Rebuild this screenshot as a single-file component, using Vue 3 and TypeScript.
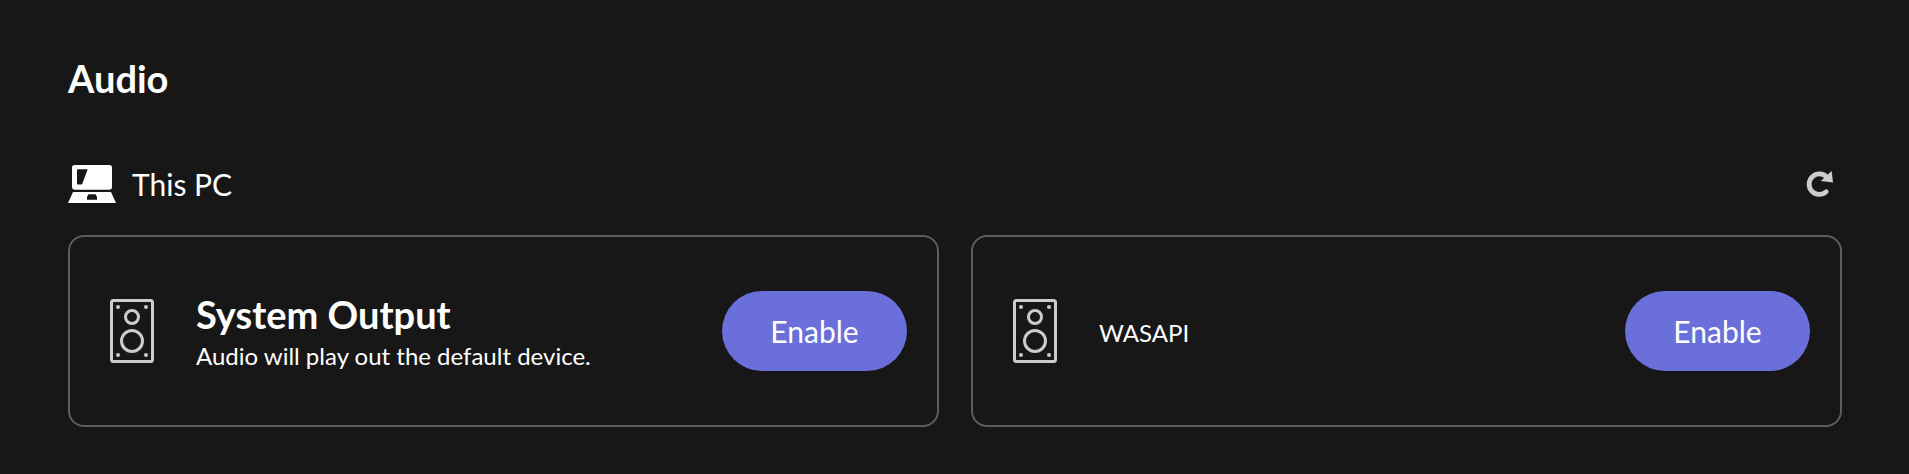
<script setup lang="ts">
interface Device {
  title?: string
  text: string
}

const devices: Device[] = [
  { title: 'System Output', text: 'Audio will play out the default device.' },
  { text: 'WASAPI' },
]
</script>

<template>
  <main class="page">
    <h1 class="heading">Audio</h1>

    <div class="group">
      <svg class="laptop" viewBox="0 0 48 48">
        <path fill="#fff" fill-rule="evenodd" d="M6.500 5H41.500Q44 5 44 7.500V27Q44 29.700 41 29.700H7Q4 29.700 4 27V7.500Q4 5 6.500 5ZM10 9.200Q9 9.200 9 10.200V23.500Q9 24.500 10 24.500H13Q14 24.500 14.400 23.500L19.700 9.200Z" />
        <path fill="#fff" fill-rule="evenodd" d="M5 32H43L48 43H0ZM20.500 34.300L19 37V39.700H29V37L27.500 34.300Z" />
      </svg>
      <span class="group-name">This PC</span>
      <button class="refresh" aria-label="Refresh">
        <svg width="28" height="28" viewBox="0 0 28 28">
          <path d="M20.200 21.700A10.200 10.200 0 1 1 20.800 7.200" fill="none" stroke="#ccc" stroke-width="4.800" stroke-linecap="round" />
          <path d="M25.700 1L27 12.600L14.800 11Z" fill="#ccc" />
        </svg>
      </button>
    </div>

    <section class="cards">
      <article v-for="device in devices" :key="device.text" class="card">
        <svg class="speaker" viewBox="0 0 64 64" fill="none" stroke="#ccc" stroke-width="3">
          <rect x="11.500" y="1.500" width="41" height="61" rx="2" />
          <circle cx="32" cy="18" r="6.500" />
          <circle cx="32" cy="42" r="10.500" />
          <g fill="#ccc" stroke="none">
            <circle cx="18" cy="8" r="2" />
            <circle cx="46" cy="8" r="2" />
            <circle cx="18" cy="56" r="2" />
            <circle cx="46" cy="56" r="2" />
          </g>
        </svg>
        <div class="info">
          <h2 v-if="device.title" class="title">{{ device.title }}</h2>
          <p class="text">{{ device.text }}</p>
        </div>
        <button class="enable">Enable</button>
      </article>
    </section>
  </main>
</template>

<style>
body {
  background: #171717;
}
</style>

<style scoped>
.page {
  box-sizing: border-box;
  height: 474px;
  padding: 54px 67px 0 68px;
  background: #171717;
  color: #fff;
  font-family: Lato, "Liberation Sans", sans-serif;
}
.heading {
  margin: 0;
  font-size: 38px;
  line-height: 48px;
  font-weight: 700;
}
.group {
  display: flex;
  align-items: center;
  gap: 16px;
  height: 48px;
  margin-top: 58px;
}
.laptop {
  width: 48px;
  height: 48px;
}
.group-name {
  font-size: 30px;
  line-height: 48px;
}
.refresh {
  display: flex;
  margin: 0 8px 0 auto;
  padding: 0;
  border: 0;
  background: none;
}
.cards {
  display: grid;
  grid-template-columns: 1fr 1fr;
  gap: 32px;
  margin-top: 27px;
}
.card {
  box-sizing: border-box;
  display: flex;
  align-items: center;
  gap: 32px;
  height: 192px;
  padding: 0 30px;
  border: 2px solid #5d5d5d;
  border-radius: 16px;
}
.speaker {
  width: 64px;
  height: 64px;
}
.info {
  flex: 1;
  padding-top: 4px;
}
.title {
  margin: 0;
  font-size: 38px;
  line-height: 46px;
  font-weight: 700;
}
.text {
  margin: 0;
  font-size: 24px;
  line-height: 38px;
}
.enable {
  width: 185px;
  height: 80px;
  padding: 0;
  border: 0;
  border-radius: 40px;
  background: #6b6fd9;
  color: #fff;
  font: 400 30px/48px Lato, "Liberation Sans", sans-serif;
}
</style>
